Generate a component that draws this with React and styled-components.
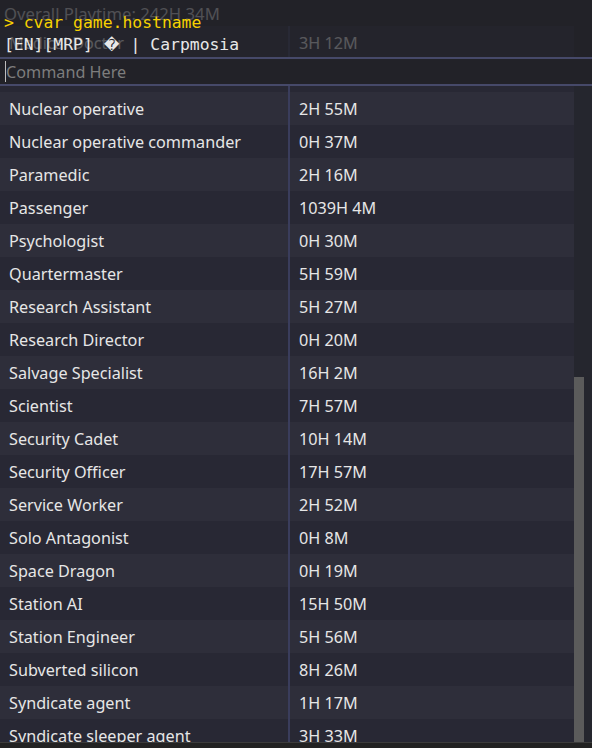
import React from "react";
import styled, { createGlobalStyle } from "styled-components";

const GlobalStyle = createGlobalStyle`
  html, body { margin: 0; padding: 0; background: #1e1e23; }
  body { overflow: hidden; }
  * { box-sizing: border-box; }
`;

const Window = styled.div`
  position: relative;
  width: 592px;
  height: 748px;
  overflow: hidden;
  background: #25262e;
  display: flex;
  flex-direction: column;
  font-family: "Noto Sans", "Open Sans", sans-serif;
  font-size: 16.2px;
  color: #e6e6e6;
`;

const Body = styled.div`
  flex: 1;
  min-height: 0;
  display: flex;
  overflow: hidden;
`;

const List = styled.div`
  flex: 1;
  display: flex;
  flex-direction: column;
`;

const Summary = styled.div`
  height: 26px;
  flex: none;
  padding-left: 4px;
  display: flex;
  align-items: center;
  font-size: 16.7px;
  color: #c8c8c8;
`;

const Row = styled.div`
  height: 33px;
  flex: none;
  display: grid;
  grid-template-columns: 288px 1fr;
  background: ${(p) => (p.$alt ? "#282834" : "#2e2e3a")};
`;

const Cell = styled.div`
  display: flex;
  align-items: center;
  padding-left: 9px;
  border-left: ${(p) => (p.$time ? "2px solid #3a3d5c" : "none")};
  white-space: nowrap;
  overflow: hidden;
`;

const Gutter = styled.div`
  width: 18px;
  flex: none;
  background: #25262e;
  padding-top: 377px;
  display: flex;
`;

const Thumb = styled.div`
  width: 10px;
  background: #5b5b5b;
`;

const BottomBar = styled.div`
  height: 6px;
  flex: none;
  background: #222222;
  border-top: 1px solid #3c3c3c;
`;

const Console = styled.div`
  position: absolute;
  top: 0;
  left: 0;
  right: 0;
  display: flex;
  flex-direction: column;
  font-family: "DejaVu Sans Mono", "Liberation Mono", monospace;
`;

const Output = styled.div`
  height: 57px;
  background: rgba(33, 33, 39, 0.72);
  display: flex;
  flex-direction: column;
  justify-content: flex-end;
  padding: 0 0 1px 4px;
  font-size: 16.4px;
  line-height: 22px;
`;

const Line = styled.div`
  color: ${(p) => p.$color || "#e8e8e8"};
  white-space: pre;
`;

const Glyph = styled.span`
  display: inline-block;
  width: 18px;
  text-align: center;
  font-family: "DejaVu Sans", "Noto Sans", sans-serif;
  font-size: 15px;
`;

const Rule = styled.div`
  height: 2px;
  background: #464969;
`;

const Input = styled.div`
  height: 25px;
  background: #222228;
  display: flex;
  align-items: center;
  padding-left: 5px;
  font-family: "Noto Sans", "Open Sans", sans-serif;
  font-size: 16.2px;
  color: #7d7d7d;
`;

const Caret = styled.span`
  width: 1px;
  height: 21px;
  background: #bdbdbd;
`;

const rows = [
  ["Medical Doctor", "3H 12M"],
  ["Musician", "0H 41M"],
  ["Nuclear operative", "2H 55M"],
  ["Nuclear operative commander", "0H 37M"],
  ["Paramedic", "2H 16M"],
  ["Passenger", "1039H 4M"],
  ["Psychologist", "0H 30M"],
  ["Quartermaster", "5H 59M"],
  ["Research Assistant", "5H 27M"],
  ["Research Director", "0H 20M"],
  ["Salvage Specialist", "16H 2M"],
  ["Scientist", "7H 57M"],
  ["Security Cadet", "10H 14M"],
  ["Security Officer", "17H 57M"],
  ["Service Worker", "2H 52M"],
  ["Solo Antagonist", "0H 8M"],
  ["Space Dragon", "0H 19M"],
  ["Station AI", "15H 50M"],
  ["Station Engineer", "5H 56M"],
  ["Subverted silicon", "8H 26M"],
  ["Syndicate agent", "1H 17M"],
  ["Syndicate sleeper agent", "3H 33M"],
];

export default function App() {
  return (
    <>
      <GlobalStyle />
      <Window>
        <Body>
          <List>
            <Summary>Overall Playtime: 242H 34M</Summary>
            {rows.map(([name, time], i) => (
              <Row key={name} $alt={i % 2 === 1}>
                <Cell>{name}</Cell>
                <Cell $time>{time}</Cell>
              </Row>
            ))}
          </List>
          <Gutter>
            <Thumb />
          </Gutter>
        </Body>
        <BottomBar />
        <Console>
          <Output>
            <Line $color="#f7d100">&gt; cvar game.hostname</Line>
            <Line>
              {"[EN][MRP] "}
              <Glyph>{"\uFFFD"}</Glyph>
              {" | Carpmosia"}
            </Line>
          </Output>
          <Rule />
          <Input>
            <Caret />
            Command Here
          </Input>
          <Rule />
        </Console>
      </Window>
    </>
  );
}
